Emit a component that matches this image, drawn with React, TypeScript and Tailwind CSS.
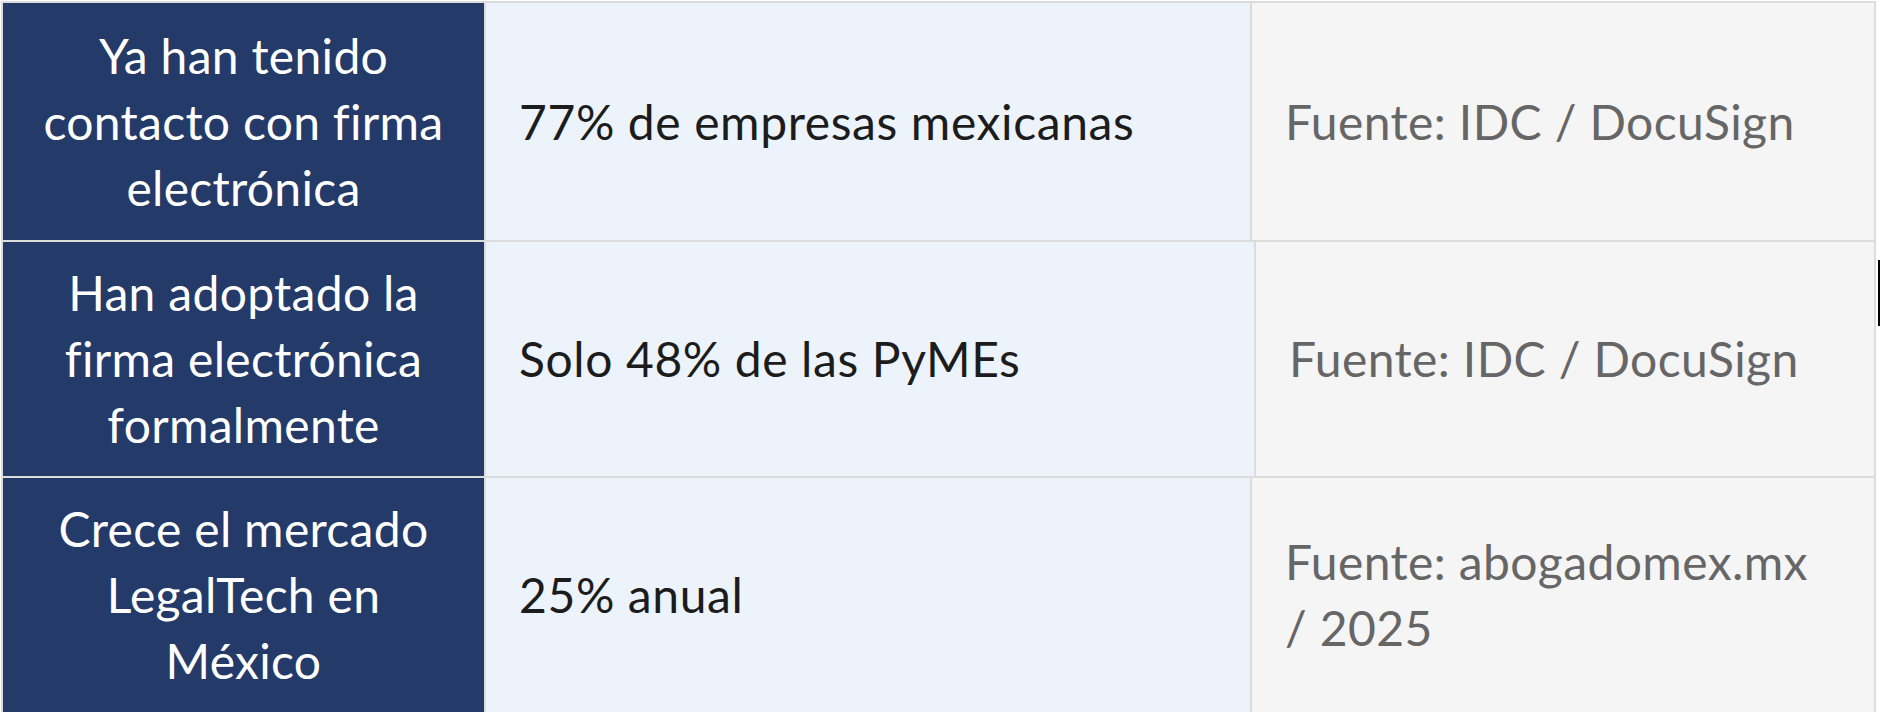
import React from "react";

const rows = [
  {
    h: "h-[237px]",
    c2: "w-[764px]",
    label: ["Ya han tenido", "contacto con firma", "electrónica"],
    value: "77% de empresas mexicanas",
    source: "Fuente: IDC / DocuSign",
  },
  {
    h: "h-[234px]",
    c2: "w-[768px]",
    label: ["Han adoptado la", "firma electrónica", "formalmente"],
    value: "Solo 48% de las PyMEs",
    source: "Fuente: IDC / DocuSign",
  },
  {
    h: "h-[234px]",
    c2: "w-[764px]",
    label: ["Crece el mercado", "LegalTech en", "México"],
    value: "25% anual",
    source: "Fuente: abogadomex.mx / 2025",
  },
];

export default function App() {
  return (
    <div
      className="relative w-[1880px] h-[712px] overflow-hidden bg-white pt-px pl-px"
      style={{ fontFamily: '"Lato", "Open Sans", sans-serif' }}
    >
      <div className="w-[1875px] bg-[#dcdcdc] p-[2px] flex flex-col gap-[2px]">
        {rows.map((r, i) => (
          <div key={i} className={`flex gap-[2px] ${r.h}`}>
            <div className="w-[481px] shrink-0 bg-[#243a69] flex items-center justify-center px-6 text-center text-white text-[48px] leading-[66px] tracking-[0.3px]">
              <div>
                {r.label.map((l, j) => (
                  <div key={j}>{l}</div>
                ))}
              </div>
            </div>
            <div className={`${r.c2} shrink-0 bg-[#ecf3fb] flex items-center pl-[33px] pr-8 text-[#1c1c1c] text-[48px] leading-[66px] tracking-[0.6px]`}>
              {r.value}
            </div>
            <div className="flex-1 bg-[#f5f5f5] flex items-center pl-[33px] pr-12 text-[#666666] text-[48px] leading-[66px] tracking-[0.4px]">
              <div>{r.source}</div>
            </div>
          </div>
        ))}
      </div>
      <div className="absolute left-[1878px] top-[260px] w-[2px] h-[66px] bg-black" />
    </div>
  );
}
